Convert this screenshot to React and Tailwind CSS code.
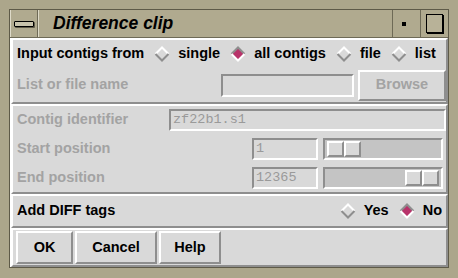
import React from "react";

const raised = "border-t-2 border-l-2 border-b-2 border-r-2 border-t-white border-l-white border-b-[#8e8e8e] border-r-[#8e8e8e]";
const sunken = "border-t-2 border-l-2 border-b-2 border-r-2 border-t-[#8e8e8e] border-l-[#8e8e8e] border-b-white border-r-white";

function Diamond({ checked }) {
  return (
    <svg width="16" height="16" viewBox="0 0 16 16" className="shrink-0">
      <polygon points="8,1 15,8 8,15 1,8" fill={checked ? "#b8336a" : "#d9d9d9"} />
      <polyline points="1.5,8 8,1.5 14.5,8" fill="none" stroke={checked ? "#8e8e8e" : "#ffffff"} strokeWidth="2" />
      <polyline points="1.5,8 8,14.5 14.5,8" fill="none" stroke={checked ? "#ffffff" : "#8e8e8e"} strokeWidth="2" />
    </svg>
  );
}

function Radio({ label, checked }) {
  return (
    <div className="flex items-center gap-[8px]">
      <Diamond checked={checked} />
      <span>{label}</span>
    </div>
  );
}

function Slider({ pos }) {
  return (
    <div className={`w-[120px] h-[22px] bg-[#c4c4c4] flex items-center px-[2px] ${sunken} ${pos === "end" ? "justify-end" : "justify-start"}`}>
      <div className="flex h-[16px]">
        <div className={`w-[17px] h-full bg-[#d9d9d9] ${raised}`} />
        <div className={`w-[17px] h-full bg-[#d9d9d9] ${raised}`} />
      </div>
    </div>
  );
}

export default function App() {
  return (
    <div
      className="w-[458px] h-[278px] bg-[#aca68b] pt-[9px] pl-[9px] pr-[9px] pb-[10px] overflow-hidden"
      style={{ fontFamily: '"Liberation Sans", Arial, sans-serif' }}
    >
      <div className="h-full flex flex-col border border-[#5e5a48]">
        {/* Title bar */}
        <div className="h-[28px] flex bg-[#b0aa8f] border-b border-[#6e6a56]">
          <div className="w-[28px] flex items-center justify-center border-r border-[#6e6a56] border-l border-l-[#dedac8]">
            <div className="w-[20px] h-[6px] border border-black bg-[#c8c3ac] rounded-[1px] shadow-[1px_1px_0_#5e5a48]" />
          </div>
          <div className="flex-1 flex items-center pl-[14px] text-[17.5px] font-bold italic text-black border-l border-[#dedac8]">
            Difference clip
          </div>
          <div className="w-[28px] flex items-center justify-center border-l border-[#6e6a56] pr-[6px]">
            <div className="w-[4px] h-[4px] bg-black" />
          </div>
          <div className="w-[28px] flex items-center justify-center border-l border-[#6e6a56]">
            <div className="w-[17px] h-[19px] border border-black bg-[#b8b298] shadow-[1px_1px_0_#000]" />
          </div>
        </div>

        {/* Content */}
        <div className="flex-1 flex flex-col bg-[#d9d9d9] border-l border-white text-[14.5px] font-bold">
          {/* Section: input */}
          <div className={`${raised} h-[66px] flex flex-col`}>
            <div className="h-[28px] flex items-center pl-[4px] gap-[10px] text-black">
              <span>Input contigs from</span>
              <Radio label="single" />
              <Radio label="all contigs" checked />
              <Radio label="file" />
              <Radio label="list" />
            </div>
            <div className="flex-1 flex items-center pl-[4px] text-[#a3a3a3]">
              <span className="w-[204px]">List or file name</span>
              <div className={`w-[133px] h-[23px] ${sunken}`} />
              <div className={`ml-[4px] w-[88px] h-[31px] flex items-center justify-center ${raised}`}>
                Browse
              </div>
            </div>
          </div>

          {/* Section: positions */}
          <div className={`${raised} h-[90px] flex flex-col justify-center gap-[7px] pl-[4px] text-[#a3a3a3]`}>
            <div className="flex items-center h-[22px]">
              <span className="w-[152px]">Contig identifier</span>
              <div
                className={`w-[277px] h-[22px] ${sunken} flex items-center pl-[2px] font-normal text-[13.5px] text-[#9a9a9a]`}
                style={{ fontFamily: '"Liberation Mono", monospace' }}
              >
                zf22b1.s1
              </div>
            </div>
            <div className="flex items-center h-[22px]">
              <span className="w-[235px]">Start position</span>
              <div
                className={`w-[66px] h-[22px] ${sunken} flex items-center pl-[2px] font-normal text-[13.5px] text-[#9a9a9a]`}
                style={{ fontFamily: '"Liberation Mono", monospace' }}
              >
                1
              </div>
              <div className="ml-[5px]">
                <Slider pos="start" />
              </div>
            </div>
            <div className="flex items-center h-[22px]">
              <span className="w-[235px]">End position</span>
              <div
                className={`w-[66px] h-[22px] ${sunken} flex items-center pl-[2px] font-normal text-[13.5px] text-[#9a9a9a]`}
                style={{ fontFamily: '"Liberation Mono", monospace' }}
              >
                12365
              </div>
              <div className="ml-[5px]">
                <Slider pos="end" />
              </div>
            </div>
          </div>

          {/* Section: diff tags */}
          <div className={`${raised} h-[34px] flex items-center pl-[4px] pr-[4px] text-black`}>
            <span className="flex-1">Add DIFF tags</span>
            <div className="flex items-center gap-[10px]">
              <Radio label="Yes" />
              <Radio label="No" checked />
            </div>
          </div>

          {/* Buttons */}
          <div className={`${raised} flex-1 flex items-center pl-[3px] gap-[2px] text-black`}>
            <div className={`w-[57px] h-[33px] flex items-center justify-center ${raised}`}>OK</div>
            <div className={`w-[82px] h-[33px] flex items-center justify-center ${raised}`}>Cancel</div>
            <div className={`w-[62px] h-[33px] flex items-center justify-center ${raised}`}>Help</div>
          </div>
        </div>
      </div>
    </div>
  );
}
